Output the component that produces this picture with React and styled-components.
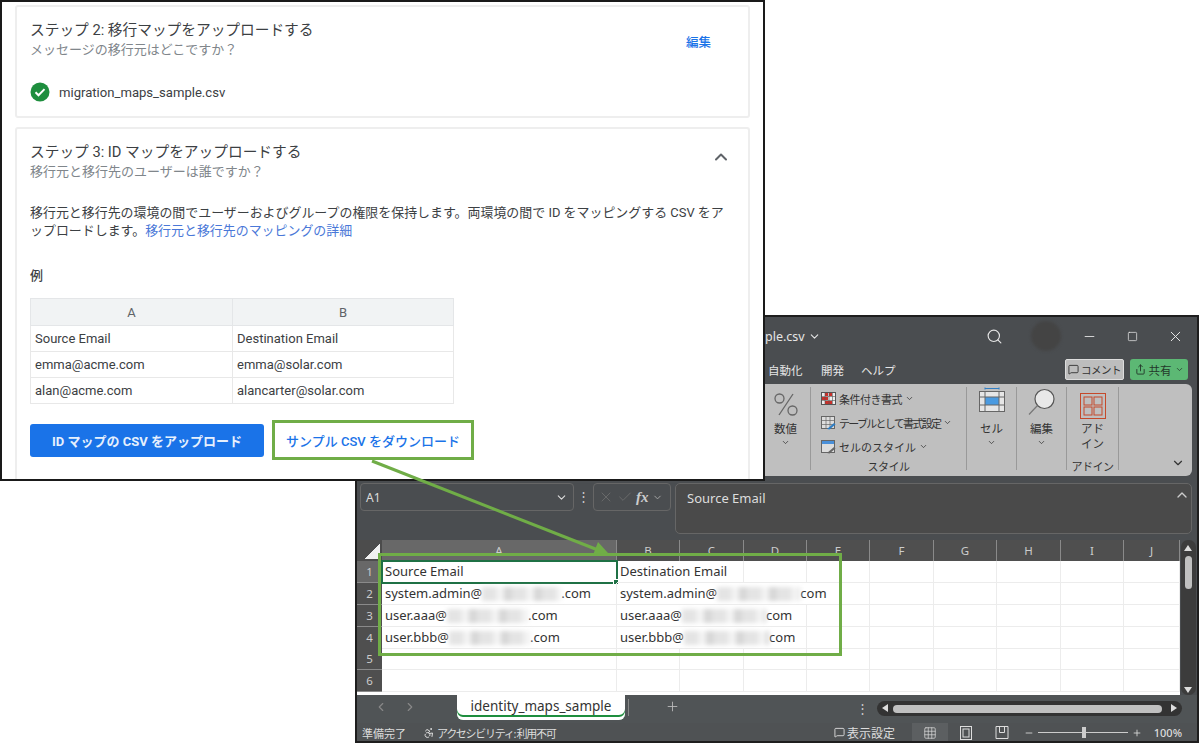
import React from 'react'
import styled, { createGlobalStyle } from 'styled-components'
import { ChevronDown, ChevronUp, ChevronLeft, ChevronRight, Search, Minus, Square, X, Check, Plus, MessageSquare, Share, Accessibility, Grid3x3 } from 'lucide-react'

const sheetRows = [
  { n: 1, current: true, cells: [{ text: 'Source Email', selected: true }, { text: 'Destination Email', span: 2 }, {}, {}, {}, {}, {}, {}, {}] },
  { n: 2, cells: [{ text: 'system.admin@', blur: 79, tail: '.com' }, { text: 'system.admin@', blur: 83, tail: 'com', span: 4 }, {}, {}, {}, {}, {}] },
  { n: 3, cells: [{ text: 'user.aaa@', blur: 81, tail: '.com' }, { text: 'user.aaa@', blur: 84, tail: 'com', span: 3 }, {}, {}, {}, {}, {}, {}] },
  { n: 4, short: true, cells: [{ text: 'user.bbb@', blur: 81, tail: '.com' }, { text: 'user.bbb@', blur: 85, tail: 'com', span: 3 }, {}, {}, {}, {}, {}, {}] },
  { n: 5, cells: [{}, {}, {}, {}, {}, {}, {}, {}, {}, {}] },
  { n: 6, cells: [{}, {}, {}, {}, {}, {}, {}, {}, {}, {}] },
]

const columns = ['A', 'B', 'C', 'D', 'E', 'F', 'G', 'H', 'I', 'J']

export default function App() {
  return (
    <Desktop>
      <GlobalStyle />

      <ExcelWindow>
        <TitleBar>
          <FileName>ple.csv <ChevronDown size={13} /></FileName>
          <TitleSearch><Search size={17} strokeWidth={1.6} /></TitleSearch>
          <Avatar />
          <WinButton><Minus size={15} strokeWidth={1.4} /></WinButton>
          <WinButton><Square size={11} strokeWidth={1.6} /></WinButton>
          <WinButton><X size={17} strokeWidth={1.4} /></WinButton>
        </TitleBar>

        <TabBar>
          <RibbonTab $width={53}>自動化</RibbonTab>
          <RibbonTab $width={40}>開発</RibbonTab>
          <RibbonTab $width={204}>ヘルプ</RibbonTab>
          <CommentButton><MessageSquare size={11} />コメント</CommentButton>
          <ShareButton><Share size={11} />共有<ChevronDown size={9} /></ShareButton>
        </TabBar>

        <Ribbon>
          <RibbonGroup $width={60} $shift={10}>
            <IconBox $top={6}><PercentIcon /></IconBox>
            <BigLabel>数値</BigLabel>
            <TinyChevron><ChevronDown size={9} /></TinyChevron>
          </RibbonGroup>
          <RibbonGroup $width={156}>
            <StyleList>
              <StyleItem $track={-0.5}><ConditionalIcon />条件付き書式<ChevronDown size={9} /></StyleItem>
              <StyleItem $track={-1.7}><TableIcon />テーブルとして書式設定<ChevronDown size={9} /></StyleItem>
              <StyleItem $track={0}><CellStyleIcon />セルのスタイル<ChevronDown size={9} /></StyleItem>
            </StyleList>
            <GroupLabel>スタイル</GroupLabel>
          </RibbonGroup>
          <RibbonGroup $width={50}>
            <IconBox><CellsIcon /></IconBox>
            <BigLabel>セル</BigLabel>
            <TinyChevron><ChevronDown size={9} /></TinyChevron>
          </RibbonGroup>
          <RibbonGroup $width={50}>
            <IconBox $top={1}><MagnifierIcon /></IconBox>
            <BigLabel>編集</BigLabel>
            <TinyChevron><ChevronDown size={9} /></TinyChevron>
          </RibbonGroup>
          <RibbonGroup $width={52}>
            <IconBox $top={6}><AddInIcon /></IconBox>
            <BigLabel>アド<br />イン</BigLabel>
            <GroupLabel>アドイン</GroupLabel>
          </RibbonGroup>
          <RibbonEnd><ChevronDown size={14} /></RibbonEnd>
        </Ribbon>

        <FormulaBar>
          <NameBox>A1<ChevronDown size={13} /></NameBox>
          <Dots>⋮</Dots>
          <FxBox>
            <X size={16} strokeWidth={1} />
            <Check size={16} strokeWidth={1} />
            <FxText>fx</FxText>
            <ChevronDown size={11} />
          </FxBox>
          <FormulaInput>
            Source Email
            <CollapseFormula><ChevronUp size={16} /></CollapseFormula>
          </FormulaInput>
        </FormulaBar>

        <SheetArea>
          <Sheet>
            <SheetRow $height={21}>
              <Corner />
              {columns.map((c, i) => (
                <ColumnHead key={c} $active={i === 0}>{c}</ColumnHead>
              ))}
            </SheetRow>
            {sheetRows.map((row) => (
              <SheetRow key={row.n} $height={row.short ? 21 : 22}>
                <RowHead $active={row.current}>{row.n}</RowHead>
                {row.cells.map((cell, i) => (
                  <Cell key={i} $span={cell.span} $selected={cell.selected}>
                    {cell.text}
                    {cell.blur && <Smudge $width={cell.blur} />}
                    {cell.tail}
                    {cell.selected && <FillHandle />}
                  </Cell>
                ))}
              </SheetRow>
            ))}
          </Sheet>
          <VScroll>
            <ScrollArrowUp />
            <VThumb />
            <ScrollArrowDown />
          </VScroll>
        </SheetArea>

        <SheetTabs>
          <TabNav>
            <ChevronLeft size={14} />
            <ChevronRight size={14} />
          </TabNav>
          <SheetTab>identity_maps_sample</SheetTab>
          <TabDivider />
          <AddSheet><Plus size={15} strokeWidth={1.4} /></AddSheet>
          <Dots>⋮</Dots>
          <HScroll>
            <ScrollArrowLeft />
            <HThumb />
            <ScrollArrowRight />
          </HScroll>
        </SheetTabs>

        <StatusBar>
          <StatusText>準備完了</StatusText>
          <StatusText $gap={17} $track={-1.3}><Accessibility size={12} /> アクセシビリティ: 利用不可</StatusText>
          <StatusSpacer />
          <StatusText $size={12}><MessageSquare size={11} /> 表示設定</StatusText>
          <ViewButton $active><Grid3x3 size={14} strokeWidth={1.2} /></ViewButton>
          <ViewButton><PageLayoutIcon /></ViewButton>
          <ViewButton><PageBreakIcon /></ViewButton>
          <ZoomSlider>
            <Minus size={10} />
            <ZoomTrack><ZoomKnob /></ZoomTrack>
            <Plus size={10} />
          </ZoomSlider>
          <ZoomValue>100%</ZoomValue>
        </StatusBar>
      </ExcelWindow>

      <BrowserPanel>
        <Card>
          <CardHeader>
            <div>
              <CardTitle>ステップ 2: 移行マップをアップロードする</CardTitle>
              <CardSub>メッセージの移行元はどこですか？</CardSub>
            </div>
            <EditLink>編集</EditLink>
          </CardHeader>
          <FileRow>
            <CheckBadge />
            migration_maps_sample.csv
          </FileRow>
        </Card>

        <Card $grow>
          <CardHeader $top>
            <div>
              <CardTitle>ステップ 3: ID マップをアップロードする</CardTitle>
              <CardSub>移行元と移行先のユーザーは誰ですか？</CardSub>
            </div>
            <CollapseIcon><ChevronUp size={20} strokeWidth={2.4} /></CollapseIcon>
          </CardHeader>
          <BodyText>
            移行元と移行先の環境の間でユーザーおよびグループの権限を保持します。両環境の間で ID をマッピングする CSV をア<br />
            ップロードします。<InlineLink>移行元と移行先のマッピングの詳細</InlineLink>
          </BodyText>
          <ExampleLabel>例</ExampleLabel>
          <ExampleTable>
            <thead>
              <tr>
                <HeadCell $width={202}>A</HeadCell>
                <HeadCell $width={221}>B</HeadCell>
              </tr>
            </thead>
            <tbody>
              <tr><BodyCell>Source Email</BodyCell><BodyCell>Destination Email</BodyCell></tr>
              <tr><BodyCell>emma@acme.com</BodyCell><BodyCell>emma@solar.com</BodyCell></tr>
              <tr><BodyCell>alan@acme.com</BodyCell><BodyCell>alancarter@solar.com</BodyCell></tr>
            </tbody>
          </ExampleTable>
          <ActionRow>
            <UploadButton>ID マップの CSV をアップロード</UploadButton>
            <DownloadLink>サンプル CSV をダウンロード</DownloadLink>
          </ActionRow>
        </Card>
      </BrowserPanel>

      <SheetHighlight />
      <ArrowOverlay viewBox="0 0 260 110" width="260" height="110">
        <line x1="6" y1="2" x2="232" y2="91" stroke="#70ad47" strokeWidth="3" />
        <polygon points="242,94 227,96 232,83" fill="#70ad47" />
      </ArrowOverlay>
    </Desktop>
  )
}

function CheckBadge() {
  return (
    <svg width="20" height="20" viewBox="0 0 20 20">
      <circle cx="10" cy="10" r="9.5" fill="#1e8e3e" />
      <path d="M5.5 10.3l3 3 6-6.2" fill="none" stroke="#fff" strokeWidth="2" />
    </svg>
  )
}

function PercentIcon() {
  return (
    <svg width="24" height="23" viewBox="0 0 24 23" fill="none" stroke="#666" strokeWidth="1.3">
      <circle cx="5.5" cy="5.500" r="4.500" />
      <circle cx="18.500" cy="17.500" r="4.500" />
      <path d="M19 1L5 22" />
    </svg>
  )
}

function ConditionalIcon() {
  return (
    <svg width="15" height="13" viewBox="0 0 15 13">
      <rect x=".5" y=".5" width="14" height="12" fill="#eee" stroke="#555" />
      <rect x="4" y="1" width="3" height="3" fill="#c8302a" />
      <rect x="8" y="1" width="3" height="3" fill="#c8302a" />
      <rect x="1" y="5" width="6" height="3" fill="#c8302a" />
      <rect x="4" y="9" width="7" height="3" fill="#c8302a" />
      <path d="M1 4.5h13M1 8.5h13M4 1v11M8 1v11M11.500 1v11" stroke="#555" strokeWidth=".6" />
    </svg>
  )
}

function TableIcon() {
  return (
    <svg width="15" height="14" viewBox="0 0 15 14">
      <rect x=".5" y=".5" width="13" height="12" fill="#ddd" stroke="#666" />
      <path d="M1 4.500h13M1 8.500h13M5 1v11M9 1v11" stroke="#666" strokeWidth=".7" />
      <path d="M6 13l7-6 1.500 1.500-6 5z" fill="#2f7ec4" />
    </svg>
  )
}

function CellStyleIcon() {
  return (
    <svg width="15" height="14" viewBox="0 0 15 14">
      <rect x=".5" y=".5" width="13" height="12" fill="#ddd" stroke="#666" />
      <rect x="1" y="1" width="12" height="3" fill="#4a90d9" />
      <path d="M6 13l7-6 1.500 1.500-6 5z" fill="#666" />
    </svg>
  )
}

function CellsIcon() {
  return (
    <svg width="26" height="26" viewBox="0 0 26 26">
      <path d="M6 1.500h14M6 .5v2M20 .5v2" stroke="#2f7ec4" />
      <rect x=".5" y="4.500" width="25" height="20" fill="#e6e6e6" stroke="#666" />
      <rect x="6" y="10" width="14" height="8" fill="#4a9ae0" />
      <path d="M1 10h24M1 18h24M6 5v19M20 5v19" stroke="#666" />
    </svg>
  )
}

function MagnifierIcon() {
  return (
    <svg width="28" height="28" viewBox="0 0 28 28">
      <circle cx="16.500" cy="11" r="9.500" fill="#e8e8e8" stroke="#555" strokeWidth="1.200" />
      <path d="M9.500 17.500L1 26.500" stroke="#777" strokeWidth="1.200" />
    </svg>
  )
}

function AddInIcon() {
  return (
    <svg width="26" height="26" viewBox="0 0 26 26">
      <g fill="none" stroke="#c5492a" strokeWidth="1">
        <rect x=".5" y=".5" width="25" height="25" />
        <rect x="4" y="4" width="8" height="8" />
        <rect x="14" y="4" width="8" height="8" />
        <rect x="4" y="14" width="8" height="8" />
        <rect x="14" y="14" width="8" height="8" />
      </g>
    </svg>
  )
}

function PageLayoutIcon() {
  return (
    <svg width="14" height="14" viewBox="0 0 14 14" fill="none" stroke="#ddd">
      <rect x="1.500" y=".5" width="11" height="13" />
      <rect x="4" y="3" width="6" height="8" />
    </svg>
  )
}

function PageBreakIcon() {
  return (
    <svg width="14" height="14" viewBox="0 0 14 14" fill="none" stroke="#ddd">
      <path d="M1 .5h12v12H1zM4.500 .5v6h5v-6" />
    </svg>
  )
}

const GlobalStyle = createGlobalStyle`
  html, body {
    margin: 0;
    padding: 0;
    background: #fff;
  }
  * {
    box-sizing: border-box;
  }
`

const Desktop = styled.div`
  position: relative;
  width: 1200px;
  height: 743px;
  overflow: hidden;
  background: #fff;
  font-family: Roboto, "Noto Sans CJK JP", sans-serif;
`

const BrowserPanel = styled.section`
  position: absolute;
  left: 0;
  top: 0;
  width: 765px;
  height: 481px;
  display: flex;
  flex-direction: column;
  gap: 9px;
  padding: 3px 13px 0;
  overflow: hidden;
  background: #fff;
  border: 2px solid #1a1a1a;
`

const Card = styled.div`
  flex: ${(p) => (p.$grow ? '1 0 auto' : '0 0 113px')};
  height: ${(p) => (p.$grow ? '360px' : '113px')};
  padding: 13px 20px 0 13px;
  border: 2px solid #eeeeee;
  border-bottom-width: ${(p) => (p.$grow ? '0' : '2px')};
  border-radius: 3px;
`

const CardHeader = styled.div`
  display: flex;
  justify-content: space-between;
  align-items: ${(p) => (p.$top ? 'flex-start' : 'center')};
  color: #5f6368;
`

const CollapseIcon = styled.span`
  display: flex;
  margin: 5px -3px 0 0;
  color: #5f6368;
`

const CardTitle = styled.div`
  font-size: 14.7px;
  line-height: 20px;
  color: #3c4043;
`

const CardSub = styled.div`
  font-size: 13px;
  line-height: 19px;
  color: #80868b;
`

const EditLink = styled.a`
  margin: 4px 17px 0 0;
  font-size: 12.5px;
  font-weight: 500;
  color: #1a73e8;
`

const FileRow = styled.div`
  display: flex;
  align-items: center;
  gap: 9px;
  margin-top: 23px;
  font-size: 13.1px;
  color: #3c4043;
`

const BodyText = styled.p`
  margin: 23px 0 0;
  font-size: 12.95px;
  line-height: 18px;
  white-space: nowrap;
  color: #3c4043;
`

const InlineLink = styled.a`
  color: #4a78d8;
`

const ExampleLabel = styled.div`
  margin-top: 27px;
  font-size: 13px;
  line-height: 18px;
  font-weight: 500;
  color: #3c4043;
`

const ExampleTable = styled.table`
  margin-top: 13px;
  width: 423px;
  border-collapse: collapse;
  table-layout: fixed;
  font-size: 13px;
  color: #3c4043;
`

const HeadCell = styled.th`
  width: ${(p) => p.$width}px;
  height: 27px;
  padding: 0;
  font-weight: 400;
  color: #5f6368;
  background: #f1f3f4;
  border: 1px solid #e4e6e8;
`

const BodyCell = styled.td`
  height: 26px;
  padding: 0 4px 1px;
  border: 1px solid #e8e8e8;
`

const ActionRow = styled.div`
  display: flex;
  align-items: center;
  gap: 8px;
  margin-top: 16px;
`

const UploadButton = styled.button`
  width: 234px;
  height: 33px;
  padding: 0;
  border: none;
  border-radius: 3px;
  font-family: inherit;
  font-size: 13px;
  font-weight: 700;
  color: #e6f0fd;
  background: #1a73e8;
`

const DownloadLink = styled.a`
  display: flex;
  align-items: center;
  justify-content: center;
  width: 202px;
  height: 40px;
  font-size: 13px;
  font-weight: 500;
  color: #1a73e8;
  border: 3px solid #70ad47;
`

const SheetHighlight = styled.div`
  position: absolute;
  left: 378px;
  top: 553px;
  width: 464px;
  height: 103px;
  border: 3px solid #70ad47;
`

const ArrowOverlay = styled.svg`
  position: absolute;
  left: 366px;
  top: 459px;
`

const ExcelWindow = styled.section`
  position: absolute;
  left: 355px;
  top: 315px;
  width: 844px;
  height: 428px;
  display: flex;
  flex-direction: column;
  overflow: hidden;
  font-family: "Noto Sans", "Noto Sans CJK JP", sans-serif;
  color: #e6e6e6;
  background: #4a4d50;
  border: 2px solid #1e1e1e;
`

const TitleBar = styled.div`
  flex: 0 0 38px;
  display: flex;
  align-items: center;
  padding-left: 408px;
`

const FileName = styled.div`
  display: flex;
  align-items: center;
  gap: 3px;
  width: 222px;
  font-size: 12.5px;
`

const TitleSearch = styled.div`
  display: flex;
  width: 45px;
`

const Avatar = styled.div`
  width: 30px;
  height: 30px;
  margin-right: 7px;
  border-radius: 50%;
  background: #444;
  filter: blur(1.5px);
`

const WinButton = styled.div`
  display: flex;
  justify-content: center;
  width: 43px;
`

const TabBar = styled.div`
  flex: 0 0 29px;
  display: flex;
  align-items: center;
  padding-left: 411px;
`

const RibbonTab = styled.span`
  width: ${(p) => p.$width}px;
  font-size: 11.5px;
`

const CommentButton = styled.div`
  display: flex;
  align-items: center;
  justify-content: center;
  gap: 2px;
  width: 59px;
  height: 21px;
  margin-right: 6px;
  font-size: 10.5px;
  letter-spacing: -0.5px;
  color: #333;
  background: #bdbdbd;
  border: 1px solid #ddd;
  border-radius: 2px;
`

const ShareButton = styled.div`
  display: flex;
  align-items: center;
  justify-content: center;
  gap: 3px;
  width: 58px;
  height: 21px;
  font-size: 11.5px;
  color: #24382b;
  background: #5cb874;
  border-radius: 3px;
`

const Ribbon = styled.div`
  flex: 0 0 92px;
  display: flex;
  justify-content: flex-end;
  width: 835px;
  padding: 3px 0 6px;
  color: #333;
  background: #bfbfbf;
  border-radius: 6px;
`

const RibbonGroup = styled.div`
  position: relative;
  display: flex;
  flex-direction: column;
  align-items: center;
  width: ${(p) => p.$width}px;
  height: 100%;
  padding-left: ${(p) => p.$shift || 0}px;
  border-right: 1px solid #999;
`

const IconBox = styled.div`
  display: flex;
  justify-content: center;
  height: 32px;
  padding-top: ${(p) => p.$top || 0}px;
`

const GroupLabel = styled.div`
  position: absolute;
  left: 0;
  right: 0;
  bottom: -4px;
  font-size: 11px;
  line-height: 14px;
  text-align: center;
  letter-spacing: -0.5px;
`

const BigLabel = styled.div`
  margin-top: 2px;
  font-size: 11.5px;
  line-height: 15px;
  text-align: center;
`

const TinyChevron = styled.div`
  display: flex;
  margin-top: 2px;
`

const StyleList = styled.div`
  display: flex;
  flex-direction: column;
  gap: 5px;
  width: 100%;
  padding: 2px 0 0 10px;
`

const StyleItem = styled.div`
  display: flex;
  align-items: center;
  gap: 3px;
  height: 19px;
  font-size: 11px;
  letter-spacing: ${(p) => p.$track}px;
  white-space: nowrap;
`

const RibbonEnd = styled.div`
  display: flex;
  align-items: flex-end;
  justify-content: flex-end;
  width: 73px;
  padding: 0 7px 0 0;
`

const FormulaBar = styled.div`
  flex: 0 0 51px;
  display: flex;
  margin-top: 7px;
  padding-left: 3px;
  color: #bbb;
`

const NameBox = styled.div`
  display: flex;
  align-items: center;
  justify-content: space-between;
  width: 214px;
  height: 28px;
  padding: 0 5px;
  font-size: 12px;
  color: #ddd;
  border: 1px solid #666;
  border-radius: 4px;
`

const Dots = styled.div`
  width: 19px;
  height: 28px;
  font-size: 13px;
  line-height: 26px;
  text-align: center;
  color: #ccc;
`

const FxBox = styled.div`
  display: flex;
  align-items: center;
  gap: 3px;
  width: 78px;
  height: 28px;
  padding: 0 2px 0 4px;
  color: #777;
  border: 1px solid #666;
  border-radius: 4px;

  svg:last-child {
    color: #aaa;
  }
`

const FxText = styled.i`
  font-family: "Liberation Serif", serif;
  font-size: 15px;
  font-weight: 700;
  color: #ccc;
`

const FormulaInput = styled.div`
  position: relative;
  width: 517px;
  margin-left: 4px;
  padding: 5px 11px;
  font-size: 13px;
  color: #ddd;
  background: #4a4a4a;
  border: 1px solid #666;
  border-radius: 5px;
`

const CollapseFormula = styled.span`
  position: absolute;
  top: 3px;
  right: 1px;
  color: #ccc;
`

const SheetArea = styled.div`
  flex: 0 0 155px;
  display: flex;
  margin-top: 6px;
`

const Sheet = styled.div`
  width: 823px;
  height: 155px;
  overflow: hidden;
  background: #fff;
`

const SheetRow = styled.div`
  display: grid;
  grid-template-columns: 25px 235px 63px 64px 63px 63px 64px 63px 64px 63px 56px;
  height: ${(p) => p.$height}px;
`

const Corner = styled.div`
  background: linear-gradient(135deg, #4c4c4c 50%, #f0f0f0 50%);
  border: solid #4c4c4c;
  border-width: 3px 2px 2px 8px;
`

const ColumnHead = styled.div`
  font-size: 11.5px;
  line-height: 21px;
  text-align: center;
  color: #ccc;
  background: ${(p) => (p.$active ? '#686868' : '#4f4f4f')};
  border-right: 1px solid #8a8a8a;
`

const RowHead = styled.div`
  font-size: 11.5px;
  line-height: 21px;
  text-align: center;
  color: #ccc;
  background: ${(p) => (p.$active ? '#686868' : '#4f4f4f')};
  border-bottom: 1px solid #8a8a8a;
`

const Cell = styled.div`
  position: relative;
  grid-column: ${(p) => (p.$span ? `span ${p.$span}` : 'auto')};
  padding-left: 3px;
  font-size: 13px;
  line-height: 21px;
  white-space: nowrap;
  color: #333;
  border-right: 1px solid #ececec;
  border-bottom: 1px solid #ececec;
  outline: ${(p) => (p.$selected ? '2px solid #1f7145' : 'none')};
  outline-offset: -1px;
`

const FillHandle = styled.i`
  position: absolute;
  right: -3px;
  bottom: -3px;
  width: 6px;
  height: 6px;
  background: #1f7145;
  border: 1px solid #fff;
`

const Smudge = styled.span`
  display: inline-block;
  width: ${(p) => p.$width}px;
  height: 14px;
  vertical-align: -3px;
  background: repeating-linear-gradient(90deg, #e4e4e4 0 14px, #f2f2f2 14px 22px, #d8d8d8 22px 30px);
  filter: blur(2px);
`

const VScroll = styled.div`
  position: relative;
  width: 15px;
  margin-left: 1px;
  background: #3c3c3c;
  border-radius: 7px;
`

const VThumb = styled.div`
  position: absolute;
  left: 4px;
  top: 16px;
  width: 7px;
  height: 33px;
  background: #c0c0c0;
  border-radius: 4px;
`

const ScrollArrowUp = styled.i`
  position: absolute;
  left: 3px;
  top: 5px;
  border: solid transparent;
  border-width: 0 4.5px 6px;
  border-bottom-color: #ddd;
`

const ScrollArrowDown = styled.i`
  position: absolute;
  left: 3px;
  bottom: 2px;
  border: solid transparent;
  border-width: 6px 4.5px 0;
  border-top-color: #ddd;
`

const SheetTabs = styled.div`
  flex: 0 0 27px;
  display: flex;
  align-items: flex-start;
  background: #505456;
`

const TabNav = styled.div`
  display: flex;
  align-items: center;
  gap: 15px;
  width: 100px;
  height: 24px;
  padding-left: 17px;
  color: #888;
`

const SheetTab = styled.div`
  width: 168px;
  height: 25px;
  padding: 0 8px;
  font-size: 13.5px;
  line-height: 22px;
  text-align: center;
  color: #333;
  background: #fff;
  border-radius: 0 0 6px 6px;
  box-shadow: inset 0 -3px 0 #fff, inset 0 -5px 0 #1e8e3e;
`

const TabDivider = styled.div`
  width: 1px;
  height: 17px;
  margin: 4px 0 0 3px;
  background: #888;
`

const AddSheet = styled.div`
  display: flex;
  width: 224px;
  margin-top: 4px;
  padding-left: 36px;
  color: #bbb;
`

const HScroll = styled.div`
  position: relative;
  width: 305px;
  height: 15px;
  margin: 6px 0 0 5px;
  background: #333;
  border-radius: 8px;
`

const HThumb = styled.div`
  position: absolute;
  left: 16px;
  top: 4px;
  width: 269px;
  height: 8px;
  background: #c0c0c0;
  border-radius: 4px;
`

const ScrollArrowLeft = styled.i`
  position: absolute;
  left: 5px;
  top: 3px;
  border: solid transparent;
  border-width: 4.5px 6px 4.5px 0;
  border-right-color: #ddd;
`

const ScrollArrowRight = styled.i`
  position: absolute;
  right: 5px;
  top: 3px;
  border: solid transparent;
  border-width: 4.5px 0 4.5px 6px;
  border-left-color: #ddd;
`

const StatusBar = styled.div`
  flex: 0 0 19px;
  display: flex;
  align-items: center;
  padding-left: 5px;
  font-size: 11px;
  color: #ddd;
  background: #4f5254;
`

const StatusText = styled.span`
  display: flex;
  align-items: center;
  gap: 2px;
  margin-left: ${(p) => p.$gap || 0}px;
  font-size: ${(p) => p.$size || 11}px;
  letter-spacing: ${(p) => p.$track || 0}px;
`

const StatusSpacer = styled.div`
  flex: 1;
`

const ViewButton = styled.div`
  display: flex;
  align-items: center;
  justify-content: center;
  width: 36px;
  height: 19px;
  margin-left: ${(p) => (p.$active ? '17px' : '0')};
  background: ${(p) => (p.$active ? '#5c5f61' : 'transparent')};
`

const ZoomSlider = styled.div`
  display: flex;
  align-items: center;
  gap: 4px;
  margin-left: 4px;
`

const ZoomTrack = styled.div`
  position: relative;
  width: 90px;
  height: 1px;
  background: #ccc;
`

const ZoomKnob = styled.i`
  position: absolute;
  left: 44px;
  top: -5px;
  width: 4px;
  height: 11px;
  background: #ccc;
`

const ZoomValue = styled.span`
  width: 46px;
  margin-left: 9px;
  padding-right: 15px;
  text-align: right;
  font-weight: 500;
`
